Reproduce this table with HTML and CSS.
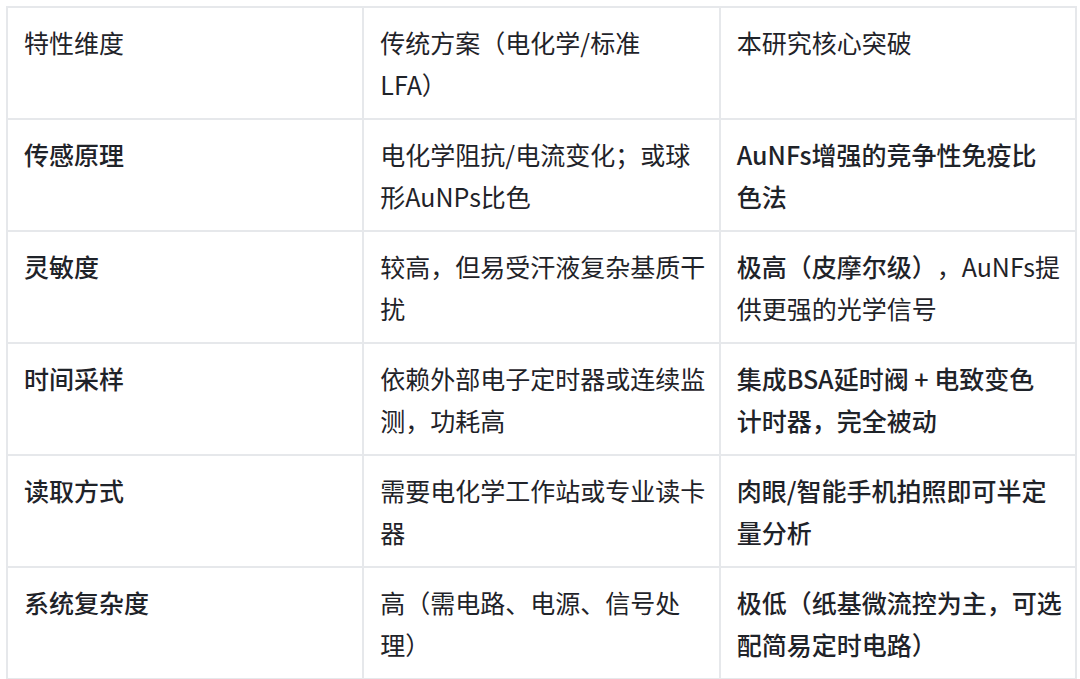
FILE: index.html
```html
<!DOCTYPE html>
<html lang="zh-CN">
<head>
<meta charset="utf-8">
<title>对比表</title>
<link rel="stylesheet" href="styles.css">
</head>
<body>
<table class="cmp">
  <colgroup>
    <col class="c1"><col class="c2"><col class="c3">
  </colgroup>
  <thead>
    <tr>
      <th>特性维度</th>
      <th>传统方案（电化学/标准<br>LFA）</th>
      <th>本研究核心突破</th>
    </tr>
  </thead>
  <tbody>
    <tr>
      <td class="key">传感原理</td>
      <td>电化学阻抗/电流变化；或球形AuNPs比色</td>
      <td><strong>AuNFs增强的竞争性免疫比<br>色法</strong></td>
    </tr>
    <tr>
      <td class="key">灵敏度</td>
      <td>较高，但易受汗液复杂基质干扰</td>
      <td><strong>极高（皮摩尔级）</strong>，AuNFs提供更强的光学信号</td>
    </tr>
    <tr>
      <td class="key">时间采样</td>
      <td>依赖外部电子定时器或连续监测，功耗高</td>
      <td><strong>集成BSA延时阀 + 电致变色<br>计时器，完全被动</strong></td>
    </tr>
    <tr>
      <td class="key">读取方式</td>
      <td>需要电化学工作站或专业读卡器</td>
      <td><strong>肉眼/智能手机拍照即可半定量分析</strong></td>
    </tr>
    <tr>
      <td class="key">系统复杂度</td>
      <td>高（需电路、电源、信号处理）</td>
      <td><strong>极低（纸基微流控为主，可选配简易定时电路）</strong></td>
    </tr>
  </tbody>
</table>
</body>
</html>
```
FILE: styles.css
```css
html, body {
  margin: 0;
  padding: 0;
  background: #ffffff;
}
body {
  padding: 6px 0 0 6px;
  font-family: "Noto Sans CJK SC", "Noto Sans", sans-serif;
  color: #1f2329;
  overflow: hidden;
}
.cmp {
  border-collapse: collapse;
  table-layout: fixed;
  width: 1071px;
  font-size: 25px;
  line-height: 42px;
  text-spacing-trim: space-all;
}
.cmp th,
.cmp td {
  border: 2px solid #e6e8eb;
  padding: 13px 10px 13px 16px;
  text-align: left;
  vertical-align: top;
  font-weight: 400;
}
.cmp .key,
.cmp strong {
  font-weight: 500;
}
```
